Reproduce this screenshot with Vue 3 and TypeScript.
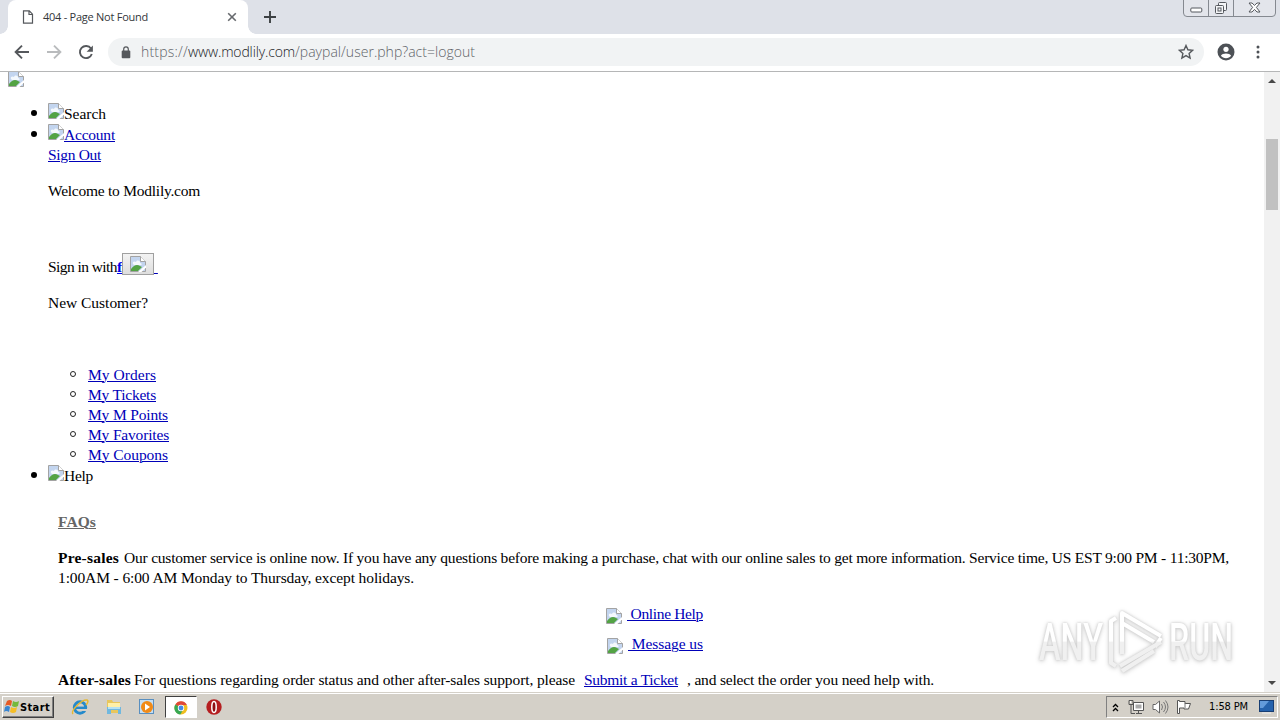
<script setup lang="ts">
import { h, type FunctionalComponent, type ObjectDirective } from 'vue'

// Distributes letter spacing so a text run takes the given width.
const vFit: ObjectDirective<HTMLElement, number> = {
  mounted(el, binding) {
    const count = Array.from(el.textContent ?? '').length
    const width = el.getBoundingClientRect().width
    if (count > 1) el.style.letterSpacing = `${(binding.value - width) / count}px`
  },
}

const accountLinks = [
  { label: 'My Orders', width: 68 },
  { label: 'My Tickets', width: 68 },
  { label: 'My M Points', width: 80 },
  { label: 'My Favorites', width: 81 },
  { label: 'My Coupons', width: 80 },
]

const Broken: FunctionalComponent = () =>
  h('svg', { viewBox: '0 0 16 16', width: 16, height: 16 }, [
    h('path', { d: 'M.5 15.500V.5h10l5 5v10z', fill: '#c3d5ef', stroke: '#a3a3a3' }),
    h('path', { d: 'M3 8c-1-3 2-3 3-2 1-3 5-1 4 1 2 0 2 2 1 2H4z', fill: '#f4f8fc' }),
    h('path', { d: 'M1 15v-2c3-4 6-5 9-3l2 1-4 4z', fill: '#53a344' }),
    h('path', { d: 'M10.500.5v5h5', fill: '#fff', stroke: '#a3a3a3' }),
    h('path', { d: 'M8 16l8-7v2.500L11.500 16z', fill: '#fff' }),
  ])
</script>

<template>
  <div class="screen">
    <header class="tabs">
      <div class="tab">
        <svg class="page-icon" width="12" height="14" viewBox="0 0 12 14"><path d="M1.500.8h5.800l3.200 3.400v9H1.500zM7 1v3.500h3.500" fill="none" stroke="#55585c" stroke-width="1.200" /></svg>
        <span class="tab-title"><span v-fit="105">404 - Page Not Found</span></span>
        <svg class="tab-close" width="10" height="10" viewBox="0 0 10 10"><path d="M1.200 1.200l7.600 7.600M8.800 1.200L1.200 8.800" stroke="#66696d" stroke-width="1.600" /></svg>
      </div>
      <svg class="plus" width="12" height="12" viewBox="0 0 12 12"><path d="M6 0v12M0 6h12" stroke="#3c4043" stroke-width="1.900" /></svg>
      <div class="window-buttons">
        <span class="wb"><svg width="13" height="6" viewBox="0 0 13 6"><rect x=".8" y="1" width="11" height="4" rx="1" fill="#fff" stroke="#55585e" /></svg></span>
        <span class="wb restore"><svg width="14" height="14" viewBox="0 0 14 14"><g fill="#f4f5f7" stroke="#55585e"><rect x="4.500" y="1.500" width="8" height="8" rx="1" /><rect x="1.500" y="4.500" width="8" height="8" rx="1" /><rect x="4" y="7" width="3" height="3" /></g></svg></span>
        <span class="wb close"><svg width="13" height="11" viewBox="0 0 13 11"><path d="M1 1h3l2.500 2.400L9 1h3L8.400 5.400 12 10H9L6.500 7.400 4 10H1l3.600-4.600z" fill="#fff" stroke="#55585e" /></svg></span>
      </div>
    </header>

    <nav class="toolbar">
      <svg class="nav-icons" width="108" height="37" viewBox="0 0 108 37" fill="none" stroke-width="1.900">
        <path d="M29 18H16M22 11.600L15.600 18l6.400 6.400" stroke="#55585c" />
        <path d="M47 18h13M54 11.600l6.400 6.400-6.400 6.400" stroke="#b9bbbd" />
        <path d="M91 14.500a6.100 6.100 0 1 0 .8 5.500" stroke="#55585c" />
        <path d="M92.900 11.500v6.300h-6.300z" fill="#55585c" />
      </svg>
      <div class="address">
        <svg class="lock" width="10" height="13" viewBox="0 0 10 13"><rect x=".7" y="4.600" width="8.600" height="7.600" rx="1" fill="#55585c" /><path d="M2.700 5V3.200a2.300 2.300 0 0 1 4.600 0V5" fill="none" stroke="#55585c" stroke-width="1.200" /></svg>
        <span v-fit="47" class="url">https://</span><span v-fit="107" class="url host">www.modlily.com</span><span v-fit="180" class="url">/paypal/user.php?act=logout</span>
        <svg class="star" width="16" height="16" viewBox="0 0 16 16"><path d="M8 1.500l1.900 4.300 4.700.5-3.500 3.100 1 4.600L8 11.600 3.900 14l1-4.600L1.400 6.300l4.700-.5z" fill="none" stroke="#55585c" stroke-width="1.400" /></svg>
      </div>
      <svg class="profile" width="18" height="18" viewBox="0 0 18 18"><circle cx="9" cy="9" r="8.500" fill="#4d5156" /><circle cx="9" cy="6.300" r="2.600" fill="#fff" /><path d="M3.900 12.700c1.500-3 8.700-3 10.200 0-2.200 3.300-8 3.300-10.200 0z" fill="#fff" /></svg>
      <svg class="menu" width="4" height="14" viewBox="0 0 4 14" fill="#4d5156"><circle cx="2" cy="2" r="1.500" /><circle cx="2" cy="7" r="1.500" /><circle cx="2" cy="12" r="1.500" /></svg>
    </nav>

    <div class="viewport">
      <main class="page">
        <div class="logo"><Broken class="broken" /></div>
        <div class="item bullet search"><Broken class="broken" /><span v-fit="42">Search</span></div>
        <div class="item bullet account"><Broken class="broken" /><a v-fit="51">Account</a></div>
        <div class="item"><a v-fit="53">Sign Out</a></div>
        <p class="item welcome"><span v-fit="152">Welcome to Modlily.com</span></p>
        <div class="item signin"><span v-fit="69">Sign in with</span><a class="facebook">f</a><button><Broken class="broken" /></button><a class="trail">&nbsp;</a></div>
        <p class="item customer"><span v-fit="100">New Customer?</span></p>
        <ul class="links">
          <li v-for="link in accountLinks" :key="link.label"><a v-fit="link.width">{{ link.label }}</a></li>
        </ul>
        <div class="item bullet help"><Broken class="broken" /><span v-fit="29">Help</span></div>
        <section class="details">
          <h4><span v-fit="38">FAQs</span></h4>
          <p><b v-fit="61">Pre-sales</b><span v-fit="1105" class="after-bold">Our customer service is online now. If you have any questions before making a purchase, chat with our online sales to get more information. Service time, US EST 9:00 PM - 11:30PM,</span><br><span v-fit="356">1:00AM - 6:00 AM Monday to Thursday, except holidays.</span></p>
          <div class="contact online"><Broken class="broken" /><a v-fit="76">&nbsp;Online Help</a></div>
          <div class="contact message"><Broken class="broken" /><a v-fit="75">&nbsp;Message us</a></div>
          <p class="sales"><b v-fit="73">After-sales</b><span v-fit="441" class="after-bold">For questions regarding order status and other after-sales support, please</span><a v-fit="94" class="ticket">Submit a Ticket</a><span v-fit="247">, and select the order you need help with.</span></p>
        </section>
      </main>
      <aside class="scrollbar">
        <svg class="up" width="8" height="4" viewBox="0 0 8 4"><path d="M0 4l4-4 4 4z" fill="#484848" /></svg>
        <div class="thumb"></div>
        <svg class="down" width="8" height="4" viewBox="0 0 8 4"><path d="M0 0h8L4 4z" fill="#484848" /></svg>
      </aside>
    </div>

    <svg class="watermark" width="230" height="80" viewBox="0 0 230 80">
      <defs>
        <linearGradient id="fade" gradientUnits="userSpaceOnUse" x1="0" y1="0" x2="0" y2="80">
          <stop offset=".49" stop-color="#fff" />
          <stop offset=".5" stop-color="#f0f0f0" />
        </linearGradient>
      </defs>
      <g class="mark">
        <text x="9" y="58" textLength="64" lengthAdjust="spacingAndGlyphs" fill="url(#fade)">ANY</text>
        <text x="139" y="58" textLength="64" lengthAdjust="spacingAndGlyphs" fill="url(#fade)">RUN</text>
        <path d="M86 16l-5 3v42l5 3M92 52V11l39 23M92 21l32 19M131 40L90 64M131 36l-6 9M92 69l32-20" stroke="url(#fade)" />
      </g>
    </svg>

    <footer class="taskbar">
      <button class="start"><svg width="16" height="16" viewBox="0 0 16 16"><path d="M3 2q3-2 5 0L7 7Q4 5 1 7z" fill="#e65a25" /><path d="M9 2q3 2 6 0l-1 5q-3 2-6 0z" fill="#75b93c" /><path d="M1 8q3-2 5 0l-1 5q-3-2-5 0z" fill="#3885d1" /><path d="M7 8q3 2 6 0l-1 5q-3 2-6 0z" fill="#f5be26" /></svg><span v-fit="30">Start</span></button>
      <svg class="app ie" width="18" height="18" viewBox="0 0 18 18"><circle cx="9" cy="9.500" r="5.700" fill="none" stroke="#258acb" stroke-width="3" /><path d="M5 9.800h10" stroke="#258acb" stroke-width="2.400" /><path d="M11 12h5" stroke="#d4d0c8" stroke-width="2" /><path d="M2 16C-1 13 11 1 16 2c2 1 0 4-1 5" fill="none" stroke="#e6b832" stroke-width="1.500" /></svg>
      <svg class="app folder" width="18" height="18" viewBox="0 0 18 18"><path d="M2 2h5l1 2h7v11H2z" fill="#e8c65c" /><path d="M3 5h12v4H3z" fill="#fff0a8" /><path d="M2 9h14v7h-3v-4H6v4H2z" fill="#70b8df" /><path d="M3 9h12v2H3z" fill="#b5e1f3" /></svg>
      <svg class="app player" width="18" height="18" viewBox="0 0 18 18"><rect x="1.500" y="1.500" width="14" height="14" fill="#c5def2" stroke="#598fc0" /><circle cx="9" cy="9" r="6" fill="#f18a16" /><path d="M7 5.500l5 3.500-5 3.500z" fill="#fff" /></svg>
      <div class="active"><svg width="16" height="16" viewBox="0 0 16 16"><circle cx="8" cy="8" r="6.500" fill="#efbe20" /><path d="M8 8L2.300 4.600A6.500 6.500 0 0 1 13.900 5H8z" fill="#df4938" /><path d="M8 8l-5.700-3.400A6.500 6.500 0 0 0 7.300 14.500L10 10z" fill="#38a852" /><circle cx="8" cy="8" r="3.200" fill="#fff" /><circle cx="8" cy="8" r="2.400" fill="#438be5" /></svg></div>
      <svg class="app opera" width="18" height="18" viewBox="0 0 18 18"><circle cx="9" cy="9" r="7.700" fill="#b51e20" /><ellipse cx="9" cy="9" rx="2.200" ry="5.500" fill="#8e0f13" stroke="#fff" stroke-width="1.500" /></svg>
      <div class="tray">
        <svg class="chev" width="7" height="9" viewBox="0 0 7 9"><path d="M1 4l2.500-2.500L6 4M1 8l2.500-2.500L6 8" fill="none" stroke="#000" stroke-width="1.300" /></svg>
        <svg class="network" width="16" height="16" viewBox="0 0 16 16"><path d="M5.500 3.500h10v8h-10z" fill="#fff" stroke="#555" /><path d="M7 5h7v5H7z" fill="#aaa" stroke="#fff" /><path d="M1 1.500h4v4H1zM3 6v8.500h4M8 14.500h6M10.500 12v2" fill="none" stroke="#555" /><path d="M2 2h1v2H2z" fill="#fff" /></svg>
        <svg class="sound" width="17" height="16" viewBox="0 0 17 16"><path d="M1 5.500h2.500L7.500 2v12l-4-3.500H1z" fill="#fff" stroke="#666" /><path d="M9.500 5q2 3 0 6M11.500 3q4 5 0 10M13.500 1.500q5 6.500 0 13" fill="none" stroke="#777" /></svg>
        <svg class="flag" width="16" height="16" viewBox="0 0 16 16"><path d="M1.500 1.500h2v1h5.500v2h5.500l-2 5.500H8V9H3.500v5.500h-2z" fill="#fff" stroke="#555" /><path d="M9 4v5" stroke="#777" /></svg>
        <span class="clock"><span v-fit="39">1:58 PM</span></span>
        <svg class="desktop" width="15" height="14" viewBox="0 0 15 14"><rect x=".5" y=".5" width="14" height="11" fill="#2663ad" stroke="#183e73" /><path d="M1 1h9L4 8H1z" fill="#639bdb" /><path d="M3 13h9" stroke="#eee" /></svg>
      </div>
    </footer>
  </div>
</template>

<style>
html, body { margin: 0; overflow: hidden; }
</style>

<style scoped>
* { box-sizing: border-box; }
.screen { position: relative; width: 1280px; height: 720px; overflow: hidden; display: flex; flex-direction: column; background: #fff; color: #000; font: 15.500px/20px "Liberation Serif", serif; }
svg { display: block; flex: none; }
span, a, b { white-space: nowrap; }
.tabs { height: 34px; flex: none; display: flex; background: #dee1e8; padding-left: 8px; }
.tab { width: 240px; height: 34px; position: relative; display: flex; align-items: center; padding-left: 14px; background: #fff; border-radius: 8px 8px 0 0; }
.tab::before, .tab::after { content: ""; position: absolute; bottom: 0; width: 8px; height: 8px; }
.tab::before { left: -8px; background: radial-gradient(circle at 0 0, #dee1e8 7.500px, #fff 8px); }
.tab::after { right: -8px; background: radial-gradient(circle at 100% 0, #dee1e8 7.500px, #fff 8px); }
.tab-title { margin-left: 9px; width: 105px; flex: none; font: 11px/16px "Open Sans", sans-serif; color: #34373b; }
.tab-close { margin-left: 79px; }
.plus { margin: 11px 0 0 16px; }
.window-buttons { margin: -1px 4px 0 auto; width: 93px; height: 18px; display: flex; border: 1px solid #858990; border-radius: 0 0 4px 4px; background: #e3e5eb; }
.wb { width: 24px; display: flex; align-items: flex-end; justify-content: center; padding-bottom: 3px; }
.wb.restore { width: 26px; border: solid #858990; border-width: 0 1px; padding-bottom: 1px; }
.wb.close { flex: 1; padding-bottom: 3px; }
.toolbar { height: 38px; flex: none; display: flex; background: #fff; border-bottom: 1px solid #b5b6b7; }
.address { width: 1096px; height: 28px; margin-top: 4px; display: flex; align-items: center; background: #f1f3f4; border-radius: 14px; padding: 0 10px 0 13px; }
.lock { margin-right: 10px; }
.url { flex: none; font: 300 14px/20px "Open Sans", sans-serif; color: #5f6368; }
.url.host { color: #202124; }
.star { margin-left: auto; }
.profile { margin: 9px 0 0 13px; }
.menu { margin: 11px 0 0 21px; }
.viewport { height: 620px; display: flex; overflow: hidden; flex: none; }
.page { width: 1264px; height: 620px; overflow: hidden; flex: none; }
.page a { color: #0000b8; text-decoration: underline; text-decoration-thickness: 1px; text-underline-offset: 1px; }
.logo { height: 32px; padding-left: 8px; overflow: hidden; }
.logo .broken { margin-top: -1px; }
.item { position: relative; height: 20px; margin: 0 0 0 48px; display: flex; }
.item > .broken { margin-top: -1px; }
.bullet::before { content: ""; position: absolute; left: -17px; top: 6px; width: 6px; height: 6px; border-radius: 50%; background: #000; }
.account { margin-top: 1px; }
.welcome { margin-top: 16px; }
.signin { margin-top: 56px; }
.signin .facebook { font-weight: bold; color: #0000e8; width: 5px; }
.signin button { width: 32px; height: 22px; margin-top: -4px; padding: 2px 7px; border: 1px solid #a0a0a0; border-radius: 0; background: linear-gradient(#f3f3f3, #dedede); }
.trail { width: 4px; }
.customer { margin-top: 16px; }
.links { margin: 52px 0 0; padding: 0 0 0 88px; list-style: none; }
.links li { position: relative; height: 20px; }
.links li::before { content: ""; position: absolute; left: -18px; top: 6px; width: 4px; height: 4px; border: 1px solid #222; border-radius: 50%; }
.help { margin-top: 1px; }
.details { margin: 26px 0 0 58px; }
h4 { height: 20px; margin: 0 0 16px; font-size: 15.500px; color: #666; text-decoration: underline; text-decoration-thickness: 1px; }
.details p { height: 40px; margin: 0; }
.after-bold { margin-left: 5px; }
.contact { height: 20px; display: flex; align-items: flex-end; }
.contact .broken { margin-right: 5px; }
.online { margin: 16px 0 0 548px; }
.message { margin: 10px 0 0 549px; }
.details .sales { display: flex; height: 20px; margin-top: 16px; }
.sales .after-bold { margin-left: 3px; }
.ticket { margin: 0 9px; }
.scrollbar { width: 16px; background: #f1f1f1; display: flex; flex-direction: column; align-items: center; }
.up { margin-top: 7px; }
.thumb { width: 12px; height: 71px; margin-top: 56px; background: #c1c1c1; }
.down { margin: auto 0 7px; }
.watermark { position: absolute; left: 1030px; top: 602px; overflow: visible; }
.mark { filter: drop-shadow(0 0 1px #ccc) drop-shadow(0 1px 2px #d2d2d2); font: 500 51px Roboto, sans-serif; }
.mark path { fill: none; stroke-width: 4px; stroke-linejoin: round; }
.taskbar { height: 28px; display: flex; align-items: flex-start; background: #d4d0c8; border-top: 1px solid #d4d0c8; box-shadow: inset 0 1px #fff; padding: 3px 2px 0; font-family: "DejaVu Sans Condensed", sans-serif; }
.start { width: 52px; height: 22px; display: flex; align-items: center; padding: 0 0 0 1px; border: 1px solid; border-color: #fff #404040 #404040 #fff; box-shadow: inset -1px -1px #808080; background: #d4d0c8; color: #000; font: bold 11px "DejaVu Sans Condensed", sans-serif; }
.app { margin-top: 2px; }
.ie { margin-left: 17px; }
.folder { margin-left: 16px; }
.player { margin-left: 15px; }
.active { width: 32px; height: 22px; margin-left: 9px; padding: 3px 7px; background: #fff; border: 1px solid; border-color: #404040 #fff #fff #404040; }
.opera { margin-left: 8px; }
.tray { width: 172px; height: 22px; margin-left: auto; display: flex; align-items: center; border: 1px solid; border-color: #808080 #fff #fff #808080; padding-left: 5px; }
.network { margin-left: 9px; }
.sound { margin-left: 8px; }
.flag { margin-left: 7px; }
.clock { margin-left: 17px; width: 39px; flex: none; font-size: 11px; line-height: 16px; }
.desktop { margin-left: 11px; }
</style>
